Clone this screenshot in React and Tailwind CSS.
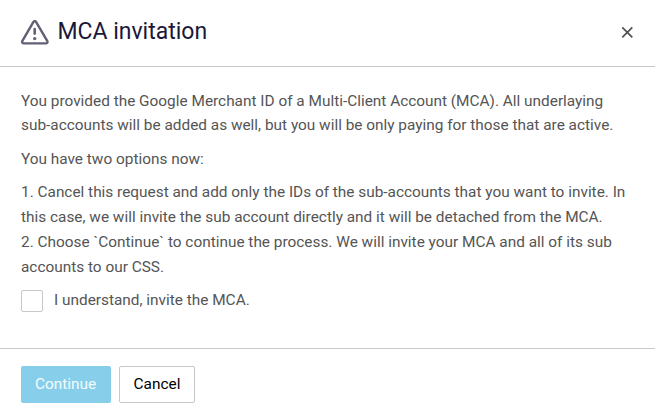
import React, { useState } from 'react';

const WarningIcon = () => (
    <svg width="28" height="25" viewBox="0 0 28 25" fill="none" stroke="#635f75" strokeWidth="2.4" strokeLinejoin="round" strokeLinecap="round">
        <path d="M12.3 2.1 1.4 20.8c-.7 1.3 0 2.6 1.4 2.6h22c1.4 0 2.1-1.3 1.4-2.6L15.2 2.1c-.7-1.1-2.2-1.1-2.9 0z" />
        <path d="M13.7 9v4.6" strokeWidth="2.6" />
        <circle cx="13.7" cy="18.6" r="1.7" fill="#635f75" stroke="none" />
    </svg>
);

const CloseIcon = () => (
    <svg width="12" height="12" viewBox="0 0 12 12" stroke="#505050" strokeWidth="1.7">
        <path d="M1.3 1.3l10 10M11.3 1.3l-10 10" />
    </svg>
);

const App = () => {
    const [accepted, setAccepted] = useState(false);

    return (
        <div className="h-[417px] w-full flex flex-col bg-white font-[Roboto,sans-serif] text-[15.39px] leading-[24.64px] text-[#555555]">
            <header className="h-[67px] shrink-0 flex items-start justify-between border-b border-[#c8c8c8] pl-[21px] pr-[22px]">
                <div className="flex items-start gap-[8.4px] pt-5">
                    <WarningIcon />
                    <h2 className="text-[23px] leading-[23px] text-[#1b1838]">MCA invitation</h2>
                </div>
                <button type="button" aria-label="Close" className="mt-[26px]">
                    <CloseIcon />
                </button>
            </header>

            <main className="h-[281px] shrink-0 px-[21px] pt-[21.5px]">
                <p className="mb-[9px]">
                    You provided the Google Merchant ID of a Multi-Client Account (MCA). All underlaying
                    <br />
                    sub-accounts will be added as well, but you will be only paying for those that are active.
                </p>
                <p className="mb-[9px]">You have two options now:</p>
                <p className="mb-[7.6px] leading-[25px]">
                    1. Cancel this request and add only the IDs of the sub-accounts that you want to invite. In
                    <br />
                    this case, we will invite the sub account directly and it will be detached from the MCA.
                    <br />
                    2. Choose `Continue` to continue the process. We will invite your MCA and all of its sub
                    <br />
                    accounts to our CSS.
                </p>
                <label className="flex items-start gap-[11px]">
                    <input
                        type="checkbox"
                        checked={accepted}
                        onChange={(e) => setAccepted(e.target.checked)}
                        className="mt-[2px] size-[22px] appearance-none rounded-[2px] border border-[#c8c8c8] bg-white checked:bg-[#87ceeb]"
                    />
                    I understand, invite the MCA.
                </label>
            </main>

            <footer className="flex flex-1 items-start gap-2 border-t border-[#c8c8c8] px-[21px] pt-[17px]">
                <button type="button" className="h-[37px] w-[90px] rounded-[2px] bg-[#87ceeb] pr-px text-white/90">
                    Continue
                </button>
                <button type="button" className="h-[37px] w-[76px] rounded-[2px] border border-[#c8c8c8] text-black">
                    Cancel
                </button>
            </footer>
        </div>
    );
};

export default App;
